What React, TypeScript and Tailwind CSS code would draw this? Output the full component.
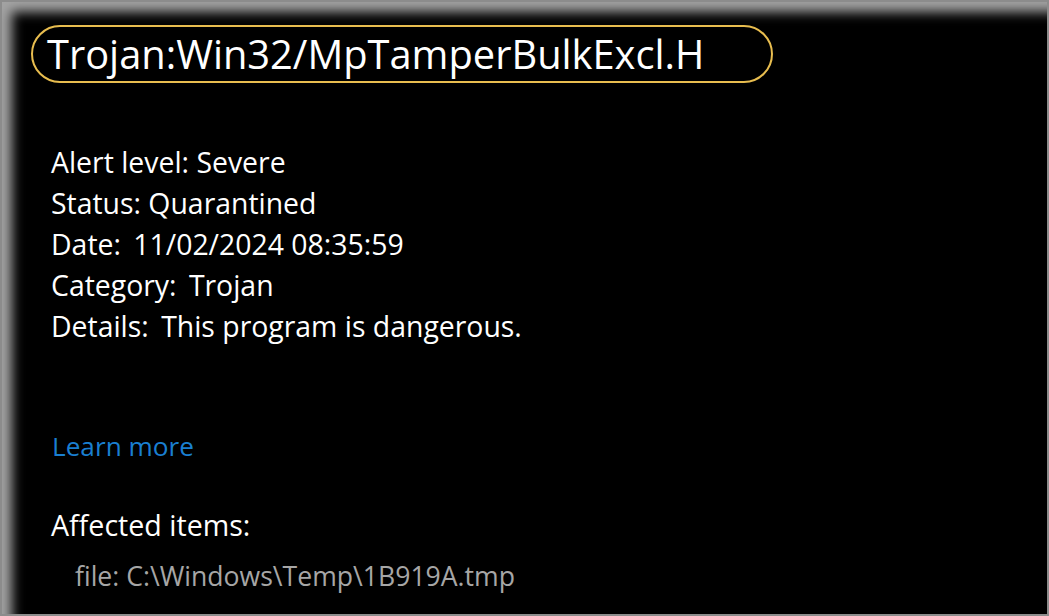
export default function App() {
  const rows: [string, string, boolean][] = [
    ["Alert level:", "Severe", false],
    ["Status:", "Quarantined", false],
    ["Date:", "11/02/2024 08:35:59", true],
    ["Category:", "Trojan", true],
    ["Details:", "This program is dangerous.", true],
  ];

  return (
    <div className="h-screen w-screen bg-[#8c8c8c] p-[2px] font-['Open_Sans',sans-serif]">
      <div className="flex h-full w-full flex-col bg-black pl-[29px] pt-[23px] shadow-[inset_14px_14px_12px_-4px_#a3a3a3]">
        <div className="flex h-[58px] w-[742px] items-center rounded-full border-2 border-[#e8bd4f] pl-[14px]">
          <h1 className="text-[39.8px] leading-none text-white">
            Trojan:Win32/MpTamperBulkExcl.H
          </h1>
        </div>

        <div className="mt-[59px] flex flex-col pl-[20px] text-[28.4px] leading-[41px] text-white">
          {rows.map(([label, value, wide]) => (
            <p key={label}>
              {label} <span className={wide ? "ml-[5px]" : ""}>{value}</span>
            </p>
          ))}
        </div>

        <a className="mt-[79px] pl-[21px] text-[26.2px] leading-[41px] text-[#1a7fd0]">
          Learn more
        </a>

        <p className="mt-[37px] pl-[20px] text-[28.6px] leading-[41px] text-white">
          Affected items:
        </p>

        <p className="mt-[14px] pl-[44px] text-[26.6px] leading-[34px] text-[#a6a6a6]">
          file: C:\Windows\Temp\1B919A.tmp
        </p>
      </div>
    </div>
  );
}
